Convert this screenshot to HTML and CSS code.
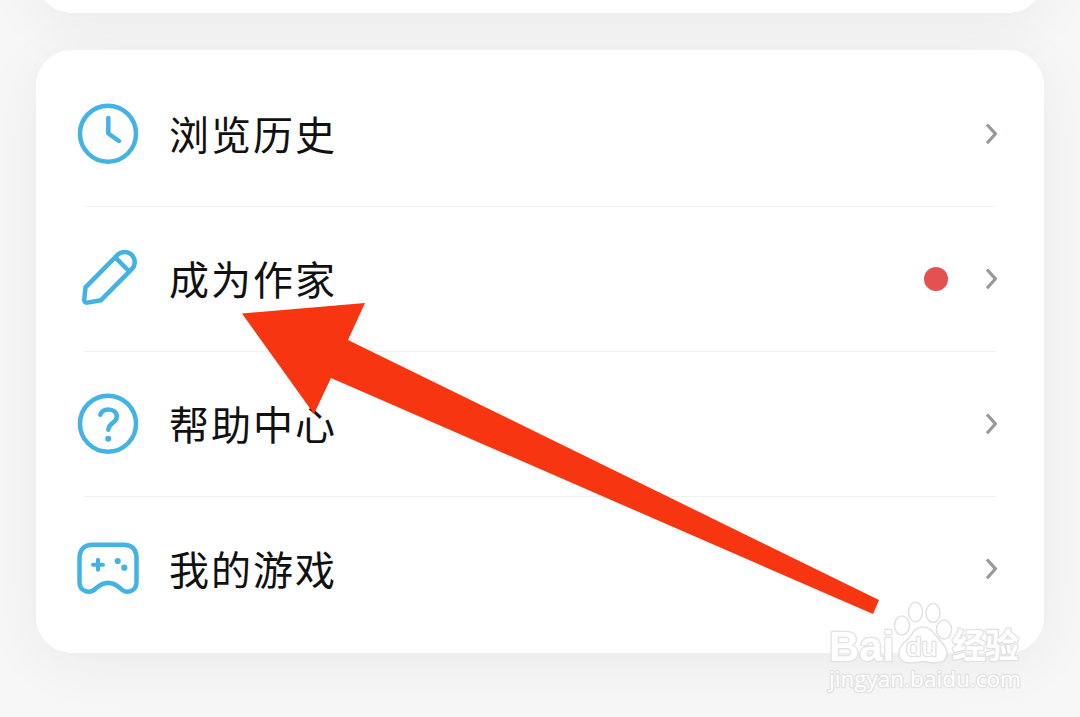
FILE: index.html
```
<!DOCTYPE html>
<html lang="zh-CN">
<head>
    <meta charset="utf-8">
    <meta content="initial-scale=1, width=device-width" name="viewport">
    <title>我的</title>
    <link rel="stylesheet" href="styles.css">
</head>

<body>
    <main class="page">
        <section class="card card-previous"></section>
        <ul class="card menu">
            <li class="row">
                <svg class="icon" viewBox="0 0 64 64">
                    <circle cx="32" cy="31.7" r="28"/>
                    <path d="M32.3 16V31.500L43 39"/>
                </svg>
                <span class="label">浏览历史</span>
                <svg class="chevron" viewBox="0 0 16 24"><path d="M4 2.500L12.500 11.800L4 21.200"/></svg>
            </li>
            <li class="row">
                <svg class="icon" viewBox="0 0 64 64">
                    <path d="M9.5 40.3L41.5 7.9A10.1 10.1 0 0 1 55.8 22.2L25 53.2L11.5 55.6Q8 56 8.3 52.3ZM39.2 10.3L53.4 24.5"/>
                </svg>
                <span class="label">成为作家</span>
                <span class="dot"></span>
                <svg class="chevron" viewBox="0 0 16 24"><path d="M4 2.500L12.500 11.800L4 21.200"/></svg>
            </li>
            <li class="row">
                <svg class="icon" viewBox="0 0 64 64">
                    <circle cx="32" cy="31.7" r="28"/>
                    <path d="M24.300 22.800C25.500 19.300 28.400 17.500 32.300 17.500C37.400 17.500 40.800 20.600 40.800 24.700C40.800 31 32.300 30.800 32.300 37.800"/>
                    <circle class="solid" cx="32.2" cy="46.8" r="3"/>
                </svg>
                <span class="label">帮助中心</span>
                <svg class="chevron" viewBox="0 0 16 24"><path d="M4 2.500L12.500 11.800L4 21.200"/></svg>
            </li>
            <li class="row">
                <svg class="icon" viewBox="0 0 64 64">
                    <path d="M17 7.800H47Q60.500 7.800 60.500 21.500V45C60.500 54.500 50.500 57.500 44.500 51.500C36.500 44 28 44 19.800 51.500C13.500 57.500 3.500 54.500 3.500 45V21.500Q3.500 7.800 17 7.800Z"/>
                    <path class="plus" d="M22 22.700V32.700M17 27.700H27"/>
                    <circle class="solid" cx="41.700" cy="24" r="3.100"/>
                    <circle class="solid" cx="48.300" cy="30.700" r="3.100"/>
                </svg>
                <span class="label">我的游戏</span>
                <svg class="chevron" viewBox="0 0 16 24"><path d="M4 2.500L12.500 11.800L4 21.200"/></svg>
            </li>
        </ul>
    </main>

    <svg class="arrow" viewBox="0 0 640 114">
        <path d="M0 10.500L123 0L106 37L637 297L631 311L89 75L72 111Z"/>
    </svg>

    <svg class="watermark" viewBox="0 0 206 104">
        <text class="brand" x="5" y="67" font-size="42" textLength="65" lengthAdjust="spacingAndGlyphs">Bai</text>
        <ellipse cx="78" cy="31.500" rx="7.500" ry="9.500"/>
        <ellipse cx="91.500" cy="18" rx="7" ry="9.700"/>
        <ellipse cx="109" cy="19" rx="7" ry="9.500"/>
        <ellipse cx="120" cy="35.500" rx="7.500" ry="9.500"/>
        <path d="M98.500 33C91 33 89 39 85 44C80 49 75 52 75 59C75 66 80 69 87 69C92 69 95 67.500 99 67.500C103 67.500 106 69 111 69C118 69 123 66 123 59C123 52 117 48 113 43C109 38 106 33 98.500 33Z"/>
        <text class="du" x="82" y="62" font-size="26" textLength="31" lengthAdjust="spacingAndGlyphs">du</text>
        <text class="brand-cn" x="128" y="63.500" font-size="34" textLength="67">经验</text>
        <text class="url" x="5" y="93" font-size="22.500" textLength="192" lengthAdjust="spacingAndGlyphs">jingyan.baidu.com</text>
    </svg>
</body>
</html>
```
FILE: styles.css
```
* {
    box-sizing: border-box;
}
body {
    background-color: #F7F7F7;
    color: #111;
    font-family: "Noto Sans CJK SC", sans-serif;
    height: 717px;
    margin: 0;
    overflow: hidden;
    position: relative;
}
.page {
    display: flex;
    flex-direction: column;
    gap: 37px;
    padding: 0 36px;
}
.card {
    background-color: #FFF;
    border-radius: 36px;
    box-shadow: 0 10px 60px rgba(0, 0, 0, 0.055);
}
.card-previous {
    height: 100px;
    margin-top: -87px;
}
.menu {
    height: 603px;
    list-style: none;
    margin: 0;
    padding: 12px 48px 0;
    position: relative;
}
.row {
    align-items: center;
    border-bottom: 1px solid #F0F0F0;
    display: flex;
    height: 145px;
}
.row:last-child {
    border-bottom-color: transparent;
}
.icon {
    fill: none;
    flex: none;
    height: 64px;
    margin-left: -8px;
    stroke: #43B3E6;
    stroke-linecap: round;
    stroke-linejoin: round;
    stroke-width: 4.5;
    width: 64px;
}
.plus {
    stroke-width: 4;
}
.solid {
    fill: #43B3E6;
    stroke: none;
}
.label {
    flex: 1;
    font-size: 40px;
    letter-spacing: 2px;
    line-height: 60px;
    margin-left: 29px;
    padding-bottom: 3px;
}
.dot {
    background-color: #E35151;
    border-radius: 50%;
    height: 24px;
    margin-right: 35px;
    width: 24px;
}
.chevron {
    fill: none;
    flex: none;
    height: 24px;
    margin-right: -3px;
    stroke: #97999A;
    stroke-linejoin: round;
    stroke-width: 3.2;
    width: 16px;
}
/* pointer laid over the list */
.arrow {
    fill: #F73510;
    height: 114px;
    left: 242px;
    overflow: visible;
    position: absolute;
    top: 303px;
    width: 640px;
}
.watermark {
    fill: #FFF;
    height: 104px;
    left: 824px;
    position: absolute;
    stroke: #E2E2E2;
    stroke-width: 1.5;
    top: 594px;
    width: 206px;
}
.watermark text {
    paint-order: stroke;
    stroke-linejoin: round;
    stroke-width: 2.5;
}
.brand {
    font-family: "Liberation Sans", sans-serif;
    font-weight: 700;
}
.du {
    font-family: "Liberation Sans", sans-serif;
}
.brand-cn {
    font-weight: 700;
}
.url {
    font-family: "Open Sans", sans-serif;
}
```
